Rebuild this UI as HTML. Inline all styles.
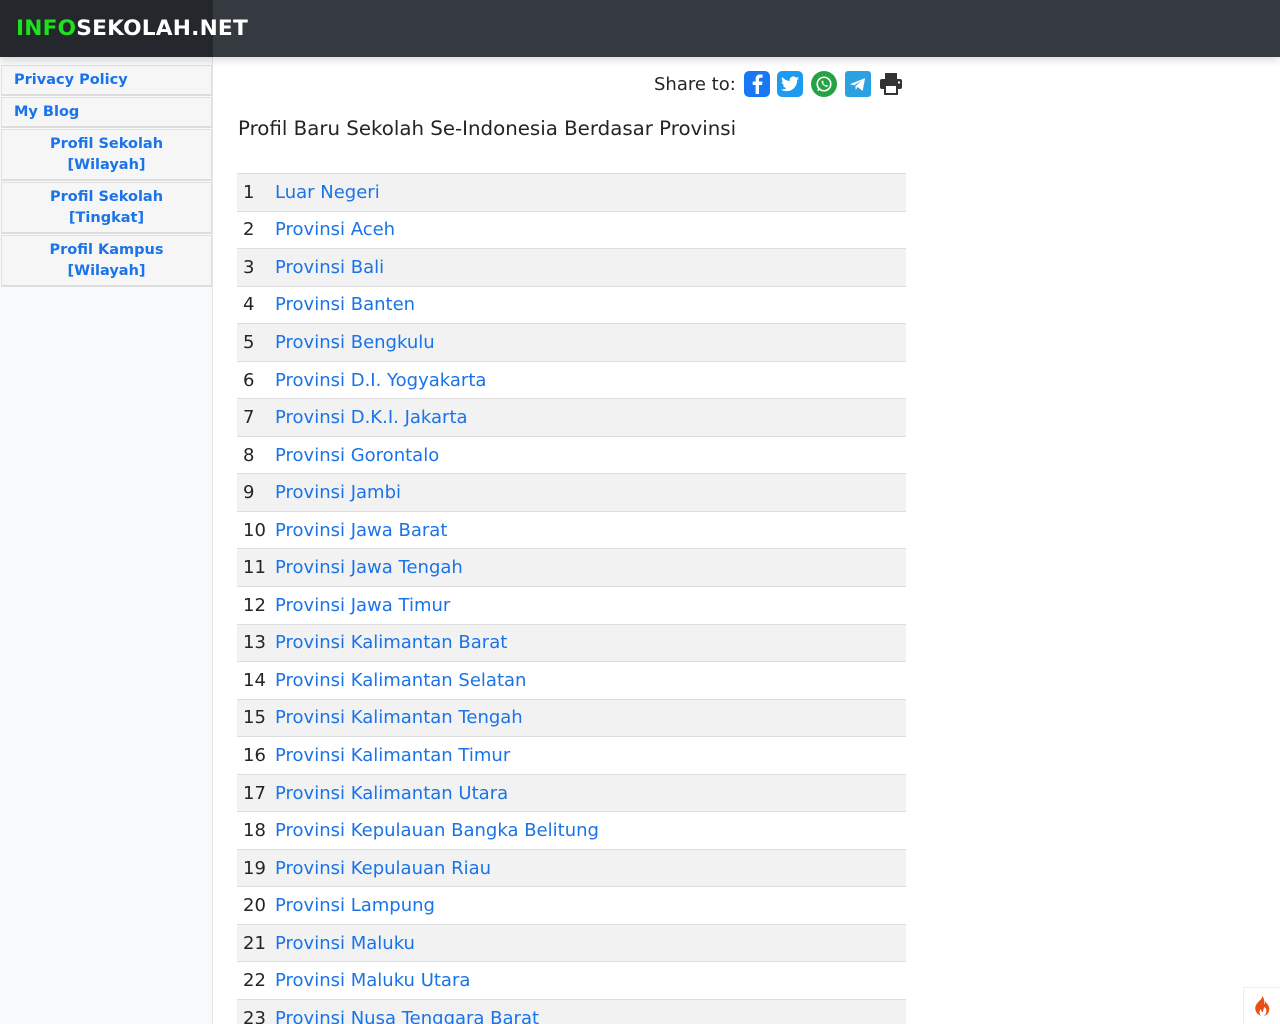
<!DOCTYPE html>
<html><head><meta charset="utf-8"><style>
*{box-sizing:border-box;margin:0;padding:0}
html{width:1280px;height:1024px;overflow:hidden}
body{width:1280px;height:1024px;overflow:hidden;background:#fff;font-family:"DejaVu Sans","Liberation Sans",sans-serif;color:#212529;position:relative}
.hdr{position:absolute;top:0;left:0;width:1280px;height:57px;background:#343a40;box-shadow:0 3px 8px rgba(0,0,0,.15);z-index:2}
.hdr .l{position:absolute;left:0;top:0;width:213px;height:57px;background:#24282c}
.logo{position:absolute;left:16px;top:16px;font-weight:bold;font-size:21.7px;color:#fff;letter-spacing:.2px}
.logo span{color:#1ee01e}
.side{position:absolute;left:0;top:57px;width:213px;height:967px;background:#f8f9fa;border-right:1px solid #e3e3e3;padding-top:8px}
.side a{display:block;margin:0 0 1px 1px;width:211px;background:#f6f6f6;border:1px solid #e0e0e0;border-bottom:2px solid #ddd;color:#1a73e8;font-weight:bold;font-size:14.5px;text-decoration:none;line-height:21px}
.side a.s{height:31px;padding:4px 12px}
.side a.c{text-align:center;height:52px;padding:4px 0}
.share{position:absolute;left:654px;top:71px;font-size:18px;display:flex;align-items:center}
.share .ic{width:26px;height:26px;border-radius:5px;margin-left:7px;display:flex;align-items:center;justify-content:center}
h1{position:absolute;left:238px;top:117px;font-size:19.8px;font-weight:normal}
table{position:absolute;left:237px;top:173px;width:669px;border-collapse:collapse;font-size:18px}
td{height:37.55px;border-top:1px solid #ddd;padding:0 6px;vertical-align:middle}
tr:nth-child(odd) td{background:#f2f2f2}
td.n{width:38px}
td.t{padding-left:0;color:#1a73e8}
.fire{position:absolute;left:1243px;top:987px;width:37px;height:37px;background:#fff;border-left:1px solid #eee;border-top:1px solid #eee;display:flex;align-items:center;justify-content:center}
</style></head><body>
<div class="hdr"><div class="l"></div><div class="logo"><span>INFO</span>SEKOLAH.NET</div></div>
<div class="side">
<a class="s">Privacy Policy</a>
<a class="s">My Blog</a>
<a class="c">Profil Sekolah<br>[Wilayah]</a>
<a class="c">Profil Sekolah<br>[Tingkat]</a>
<a class="c">Profil Kampus<br>[Wilayah]</a>
</div>
<div class="share">Share to:
<div class="ic" style="background:#1877f2;margin-left:8px"><svg width="14" height="20" viewBox="0 0 14 20"><path d="M9 20V11h3l.5-3.5H9V5.5C9 4.5 9.3 3.8 10.8 3.8H12.6V.7C12.2.6 11.2.5 10 .5 7.400.5 5.600 2 5.600 5V7.500H2.700V11H5.600V20Z" fill="#fff"/></svg></div>
<div class="ic" style="background:#1d9bf0"><svg width="18" height="16" viewBox="0 0 24 20"><path d="M24 2.4a10 10 0 0 1-2.8.8A5 5 0 0 0 23.300.4a10 10 0 0 1-3.100 1.200A4.900 4.900 0 0 0 11.800 6 14 14 0 0 1 1.700.9a4.900 4.900 0 0 0 1.500 6.600A4.900 4.900 0 0 1 1 6.900 4.900 4.900 0 0 0 4.900 11.800a5 5 0 0 1-2.200.1 4.900 4.900 0 0 0 4.600 3.400A10 10 0 0 1 0 17.300 14 14 0 0 0 7.500 19.500c9 0 14-7.500 14-14v-.6A10 10 0 0 0 24 2.400z" fill="#fff"/></svg></div>
<div class="ic" style="background:#25a244;border-radius:50%;margin-left:8px"><svg width="18" height="18" viewBox="0 0 20 20"><circle cx="10" cy="10" r="7.5" fill="none" stroke="#fff" stroke-width="1.8"/><path d="M3.500 17.500L4.500 14" stroke="#fff" stroke-width="1.8"/><path d="M7.500 6.500c-.5 1 0 3 1.800 4.800S13 13.500 14 13l.3-1.300-1.800-.9-.8.800c-1-.4-2.300-1.700-2.700-2.700l.8-.8-.9-1.800z" fill="#fff"/></svg></div>
<div class="ic" style="background:#2aa1e0;border-radius:3px;margin-left:8px"><svg width="17" height="15" viewBox="0 0 20 17"><path d="M1 8L19 1 16 16 10 11.500 8 15 7.500 10.500 15 4 6 9.500z" fill="#fff"/></svg></div>
<div class="ic" style="background:none"><svg width="24" height="22" viewBox="0 0 24 22"><rect x="6" y="0" width="12" height="6" fill="#333"/><rect x="1" y="6" width="22" height="10" rx="2" fill="#333"/><rect x="6" y="12" width="12" height="9" fill="#fff" stroke="#333" stroke-width="2"/><rect x="19" y="8.5" width="2" height="2" fill="#fff"/></svg></div>
</div>
<h1>Profil Baru Sekolah Se-Indonesia Berdasar Provinsi</h1>
<table>
<tr><td class="n">1</td><td class="t">Luar Negeri</td></tr>
<tr><td class="n">2</td><td class="t">Provinsi Aceh</td></tr>
<tr><td class="n">3</td><td class="t">Provinsi Bali</td></tr>
<tr><td class="n">4</td><td class="t">Provinsi Banten</td></tr>
<tr><td class="n">5</td><td class="t">Provinsi Bengkulu</td></tr>
<tr><td class="n">6</td><td class="t">Provinsi D.I. Yogyakarta</td></tr>
<tr><td class="n">7</td><td class="t">Provinsi D.K.I. Jakarta</td></tr>
<tr><td class="n">8</td><td class="t">Provinsi Gorontalo</td></tr>
<tr><td class="n">9</td><td class="t">Provinsi Jambi</td></tr>
<tr><td class="n">10</td><td class="t">Provinsi Jawa Barat</td></tr>
<tr><td class="n">11</td><td class="t">Provinsi Jawa Tengah</td></tr>
<tr><td class="n">12</td><td class="t">Provinsi Jawa Timur</td></tr>
<tr><td class="n">13</td><td class="t">Provinsi Kalimantan Barat</td></tr>
<tr><td class="n">14</td><td class="t">Provinsi Kalimantan Selatan</td></tr>
<tr><td class="n">15</td><td class="t">Provinsi Kalimantan Tengah</td></tr>
<tr><td class="n">16</td><td class="t">Provinsi Kalimantan Timur</td></tr>
<tr><td class="n">17</td><td class="t">Provinsi Kalimantan Utara</td></tr>
<tr><td class="n">18</td><td class="t">Provinsi Kepulauan Bangka Belitung</td></tr>
<tr><td class="n">19</td><td class="t">Provinsi Kepulauan Riau</td></tr>
<tr><td class="n">20</td><td class="t">Provinsi Lampung</td></tr>
<tr><td class="n">21</td><td class="t">Provinsi Maluku</td></tr>
<tr><td class="n">22</td><td class="t">Provinsi Maluku Utara</td></tr>
<tr><td class="n">23</td><td class="t">Provinsi Nusa Tenggara Barat</td></tr>
</table>
<div class="fire"><svg width="16" height="20" viewBox="0 0 16 20"><path d="M8 0C9 3 4 5 2 9c-2 4 0 9 5 11-2-2-2-5 0-7 0 2 1 3 2 3 0-2 1-3 1-5 2 1 3 3 2 6 0 1-1 2-2 3 4-1 6-5 5-9-1-3-3-4-4-6 0 2 0 3-1 3C11 5 10 2 8 0z" fill="#e8501b"/></svg></div>
</body></html>
